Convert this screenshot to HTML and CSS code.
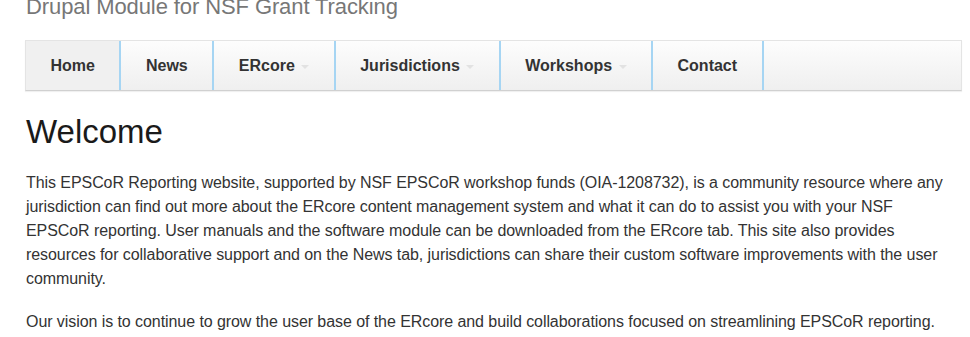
FILE: index.html
```html
<!DOCTYPE html>
<html lang="en">
<head>
  <meta charset="UTF-8" />
  <meta name="viewport" content="width=device-width, initial-scale=1.0" />
  <title>EPSCoR Reporting</title>
  <link rel="stylesheet" href="styles.css">
</head>
<body>

<div class="site-slogan">Drupal Module for NSF Grant Tracking</div>

<ul class="navbar">
  <li class="active"><a href="#">Home</a></li>
  <li><a href="#">News</a></li>
  <li><a href="#">ERcore <span class="caret"></span></a></li>
  <li><a href="#">Jurisdictions <span class="caret"></span></a></li>
  <li><a href="#">Workshops <span class="caret"></span></a></li>
  <li><a href="#">Contact</a></li>
</ul>

<h1>Welcome</h1>

<p>This EPSCoR Reporting website, supported by NSF EPSCoR workshop funds (OIA-1208732), is a community resource where any jurisdiction can find out more about the ERcore content management system and what it can do to assist you with your NSF EPSCoR reporting. User manuals and the software module can be downloaded from the ERcore tab. This site also provides resources for collaborative support and on the News tab, jurisdictions can share their custom software improvements with the user community.</p>

<p>Our vision is to continue to grow the user base of the ERcore and build collaborations focused on streamlining EPSCoR reporting.</p>

</body>
</html>
```

FILE: styles.css
```css
body {
  font-family: "Liberation Sans", Arial, sans-serif;
  font-size: 16px;
  line-height: 24px;
  margin: 0;
  padding: 0 8px 0 25px;
  background-color: #fff;
  color: #333;
}
.site-slogan {
  font-size: 22px;
  line-height: 22px;
  color: #777;
  margin-top: -4px;
  padding-left: 1px;
  letter-spacing: -0.1px;
}
.navbar {
  display: flex;
  list-style: none;
  margin: 22px 0 0;
  padding: 0;
  height: 49px;
  border: 1px solid #e4e4e4;
  border-bottom-color: #d0d0d0;
  background: linear-gradient(#fdfdfd, #efefef);
  box-shadow: 0 1px 1px rgba(0, 0, 0, 0.06);
}
.navbar li {
  border-right: 2px solid #a6d5f3;
}
.navbar a {
  display: block;
  padding: 0 24.5px;
  line-height: 49px;
  font-weight: bold;
  color: #333;
  text-decoration: none;
}
.navbar .active {
  background: #f0f0f0;
}
.caret {
  display: inline-block;
  width: 0;
  height: 0;
  margin-left: 2px;
  vertical-align: middle;
  border-top: 4px solid #e2e2e2;
  border-left: 4px solid transparent;
  border-right: 4px solid transparent;
}
h1 {
  font-size: 33px;
  line-height: 40px;
  font-weight: normal;
  color: #1a1a1a;
  margin: 21px 0 19px;
  padding-left: 1px;
}
p {
  max-width: 924px;
  margin: 0 0 19px;
  padding-left: 1px;
  letter-spacing: -0.07px;
}
```
